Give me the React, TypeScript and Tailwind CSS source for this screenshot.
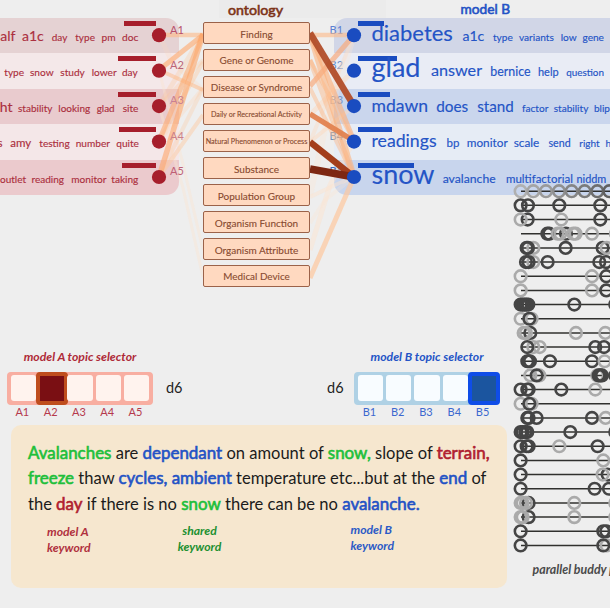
import React from 'react';

type Word = [text: string, x: number, size: number];
type Topic = { words: Word[]; bar: [number, number]; bg: string; label: string };

const topicsA: Topic[] = [
  { words: [['half', -7.5, 14], ['a1c', 22, 14], ['day', 51.7, 10], ['type', 75.3, 10], ['pm', 101.5, 10.2], ['doc', 122, 10.2]], bar: [123.5, 155.7], bg: 'bg-[#e5d2d3]', label: 'text-[#b8506a]' },
  { words: [['type', 4.3, 10.1], ['snow', 30, 10.1], ['study', 60.3, 10.1], ['lower', 91.7, 10.1], ['day', 122, 10]], bar: [118, 155.7], bg: 'bg-[#f4e8e9]', label: 'text-[#bb6478]' },
  { words: [['ght', -7.5, 14], ['stability', 18, 10], ['looking', 58.3, 10], ['glad', 96.7, 9.9], ['site', 122.7, 10.1]], bar: [118, 155.7], bg: 'bg-[#e9cbce]', label: 'text-[#c98193]' },
  { words: [['s', -2.5, 11.5], ['amy', 10.3, 11.5], ['testing', 39.3, 10.1], ['number', 75.7, 10.1], ['quite', 116.3, 10.1]], bar: [119, 155.7], bg: 'bg-[#f4e7e8]', label: 'text-[#cb7f8a]' },
  { words: [['outlet', 0, 10], ['reading', 31.5, 10], ['monitor', 71.3, 10.1], ['taking', 111.3, 10.1]], bar: [122, 155.7], bg: 'bg-[#ebcacd]', label: 'text-[#bf5f75]' },
];

const topicsB: Topic[] = [
  { words: [['diabetes', 371.5, 22], ['a1c', 462.4, 14.1], ['type', 493, 10.1], ['variants', 519, 10.1], ['low', 560.7, 10.1], ['gene', 582.5, 10.1]], bar: [357.7, 384], bg: 'bg-[#d1d6e7]', label: 'text-[#5c80d2]' },
  { words: [['glad', 371.5, 27], ['answer', 430.9, 16.2], ['bernice', 490.3, 12.4], ['help', 538, 11], ['question', 566.3, 9.9]], bar: [357.7, 397.3], bg: 'bg-[#e9ecf5]', label: 'text-[#668cc8]' },
  { words: [['mdawn', 371.5, 17.6], ['does', 436.2, 15.3], ['stand', 477.3, 15.2], ['factor', 522, 10.1], ['stability', 553.7, 10.1], ['blip', 594, 10]], bar: [357.7, 390], bg: 'bg-[#cad6ed]', label: 'text-[#7394c8]' },
  { words: [['readings', 371.5, 17.7], ['bp', 446.5, 11.5], ['monitor', 466.7, 11.8], ['scale', 513.7, 11.8], ['send', 548.5, 10.7], ['right', 579.3, 10], ['hypo', 605.5, 10]], bar: [357.7, 391.7], bg: 'bg-[#e6ecf5]', label: 'text-[#6f92b8]' },
  { words: [['snow', 371.5, 27], ['avalanche', 442.7, 12.2], ['multifactorial', 506, 11.5], ['niddm', 576.5, 10.9]], bar: [357.7, 414], bg: 'bg-[#c8d5ed]', label: 'text-[#3a67bd]' },
];

const concepts: [string, string][] = [
  ['Finding', 'text-[10px]'],
  ['Gene or Genome', 'text-[9.9px]'],
  ['Disease or Syndrome', 'text-[9.9px]'],
  ['Daily or Recreational Activity', 'text-[7.2px]'],
  ['Natural Phenomenon or Process', 'text-[7.2px]'],
  ['Substance', 'text-[10px]'],
  ['Population Group', 'text-[10px]'],
  ['Organism Function', 'text-[10px]'],
  ['Organism Attribute', 'text-[10px]'],
  ['Medical Device', 'text-[9.9px]'],
];

// [path, colour, width, opacity]
const links: [string, string, number, number][] = [
  ['M159 35 L172 62 L203 90', '#fbd9c0', 5, 0.25],
  ['M159 70 L182 160 L203 250', '#fbe3d0', 3, 0.4],
  ['M159 106 L183 188 L203 277', '#fbe3d0', 3, 0.4],
  ['M159 106 L203 60', '#fcc79d', 4, 0.3],
  ['M159 106 L203 34', '#fcc79d', 5, 0.3],
  ['M159 141 L203 62', '#fcc79d', 4, 0.4],
  ['M159 141 L203 88', '#fbd9c0', 4, 0.4],
  ['M159 177 L203 88', '#fcc79d', 4, 0.3],
  ['M159 177 L203 115', '#fcc79d', 4, 0.45],
  ['M159 70 L203 90', '#fdb987', 4, 0.5],
  ['M159 35 L203 35', '#fdb987', 4.5, 0.6],
  ['M159 70 L203 35', '#fdae77', 5, 0.65],
  ['M159 141 L203 34', '#fda76b', 5, 0.55],
  ['M159 177 L203 34', '#fda76b', 5.5, 0.6],
  ['M310 35 L354 35', '#fdb987', 4.5, 0.6],
  ['M354 35 L310 142', '#fbd9c0', 4, 0.4],
  ['M354 35 L326 125 L310 195', '#fbe3d0', 6, 0.3],
  ['M354 70 L310 115', '#fbd9c0', 5, 0.5],
  ['M354 106 L310 142', '#fbd9c0', 4, 0.5],
  ['M354 141 L330 185 L310 250', '#fbe3d0', 5, 0.5],
  ['M354 177 L335 185 L310 197', '#fbe3d0', 4, 0.5],
  ['M354 177 L325 200 L310 223', '#fbe3d0', 4, 0.3],
  ['M310 34 L354 141', '#fdae77', 5, 0.6],
  ['M310 34 L354 177', '#fdae77', 6, 0.55],
  ['M310 60 L354 141', '#fdb987', 4, 0.5],
  ['M310 60 L354 177', '#fdae77', 5, 0.4],
  ['M310 88 L354 177', '#fdb987', 4, 0.45],
  ['M310 86 L354 35', '#f8ab7e', 5, 0.7],
  ['M310 278 L354 177', '#fdc79e', 5, 0.7],
  ['M310 114 L354 141', '#e2824f', 5.5, 0.95],
  ['M310 33 L354 106', '#b14d29', 6.5, 0.95],
  ['M310 142 L354 177', '#a33e1c', 6.5, 1],
  ['M310 169 L354 177', '#7d2712', 7.5, 1],
];

const D = '#454545';
const G = '#aaaaaa';
type Mark = [number, string];
const d = (...xs: number[]): Mark[] => xs.map((x) => [x, D]);
const g = (...xs: number[]): Mark[] => xs.map((x) => [x, G]);

const plots: Mark[][] = [
  [[46, '#b0b0b0'], [84, '#a4a4a4'], [122, '#9a9a9a'], [161, '#909090'], [199, '#858585'], [238, '#7b7b7b'], [276, '#6e6e6e'], [312, '#606060']],
  d(46, 68, 162, 285),
  [...d(67), ...g(46, 168), ...d(285)],
  [...d(126, 132, 182), ...g(157, 165, 204, 211, 260, 332)],
  [...g(84), ...d(64, 68, 181, 292), ...g(304)],
  [...g(84), ...d(62, 70, 127, 282, 302)],
  [...g(46, 260), ...d(303)],
  [...g(46, 260), ...d(303)],
  d(46, 52, 58, 63, 69, 207, 330),
  [...g(46, 79), ...d(72)],
  [...d(75), ...g(55, 62, 212, 300), ...d(335)],
  [...g(103, 84), ...d(66, 270, 296)],
  [...d(66, 70, 74, 134, 260), ...g(298)],
  [...g(75, 102), ...d(94), ...g(276), ...d(280, 285, 290, 330)],
  [...d(46, 66, 70, 168), ...g(270)],
  [...g(46, 79), ...d(72)],
  [...d(66, 70, 94, 260), ...g(301)],
  d(46, 52, 60, 66, 195, 330),
  [...d(46, 64, 70), ...g(162), ...d(277)],
  [...d(46), ...g(294)],
  [...d(46, 307), ...g(292)],
  d(46, 268, 311),
  [...d(70), ...g(46, 52, 62, 207, 330)],
  [...d(70), ...g(46, 52, 207, 330)],
  d(46, 294, 303),
  [...d(46), ...g(304), ...d(294)],
];

function TopicPanel({ side, topics }: { side: 'A' | 'B'; topics: Topic[] }) {
  const a = side === 'A';
  const left = a ? 0 : 334;
  return (
    <div className={a ? 'w-[179px] shrink-0' : 'w-[276px] shrink-0'}>
      {topics.map((t, i) => {
        const round = a
          ? i === 0 ? 'rounded-tr-[13px]' : i === 4 ? 'rounded-br-[13px]' : ''
          : i === 0 ? 'rounded-tl-[13px]' : i === 4 ? 'rounded-bl-[13px]' : '';
        return (
          <div key={i} className={`relative flex h-[35.45px] items-baseline ${t.bg} ${round}`}>
            <div
              className={`absolute top-[3px] h-[5px] ${a ? 'bg-[#a61e2b]' : 'bg-[#1a4cc0]'}`}
              style={{ left: t.bar[0] - left, width: t.bar[1] - t.bar[0] }}
            />
            <span className={`absolute top-[4.5px] text-[11px] leading-[14px] ${t.label} ${a ? 'left-[170px] z-20' : '-left-[4.5px]'}`}>
              {side}{i + 1}
            </span>
            <div className="h-[23px] shrink-0" style={{ marginLeft: t.words[0][1] - left }} />
            {t.words.map(([text, x, size], k) => (
              <span
                key={k}
                className={`shrink-0 whitespace-nowrap leading-[0.8] [-webkit-text-stroke:0.15px_currentColor] ${size > 25 ? 'translate-y-px' : ''} ${a ? 'text-[#ac3040]' : 'text-[#2454c6]'}`}
                style={{ fontSize: size, width: k + 1 < t.words.length ? t.words[k + 1][1] - x : 30 }}
              >
                {text}
              </span>
            ))}
          </div>
        );
      })}
    </div>
  );
}

function Selector({ side, selected }: { side: 'A' | 'B'; selected: number }) {
  const a = side === 'A';
  return (
    <div className="w-[146px]">
      <div className={`whitespace-nowrap text-center text-[12.2px] font-bold italic leading-[14px] ${a ? 'text-[#ae2937]' : 'text-[#2454c6]'}`}>
        model {side} topic selector
      </div>
      <div className={`mt-[8px] flex h-[32.5px] items-center rounded-[4px] px-[2.2px] ${a ? 'bg-[#f8aea1]' : 'bg-[#afd1e5]'}`}>
        {[0, 1, 2, 3, 4].map((i) => (
          <div key={i} className="flex w-[28.3px] shrink-0 justify-center">
            {i === selected ? (
              <div className={`h-[32.5px] w-[32px] shrink-0 rounded-[4px] border-4 ${a ? 'border-[#bf4d1d] bg-[#7a0f13]' : 'border-[#0f4de8] bg-[#1b559f]'}`} />
            ) : (
              <div className={`h-[26px] w-[25.4px] rounded-[3px] ${a ? 'bg-[#fff3ee]' : 'bg-[#f8fcff]'}`} />
            )}
          </div>
        ))}
      </div>
      <div className={`mt-[0.5px] flex px-[1.2px] text-[11px] leading-[14px] ${a ? 'text-[#b5394c]' : 'text-[#3c68cf]'}`}>
        {[1, 2, 3, 4, 5].map((i) => (
          <span key={i} className="w-[28.3px] shrink-0 text-center">{side}{i}</span>
        ))}
      </div>
    </div>
  );
}

function K({ c, children }: { c: 'a' | 'b' | 's'; children: React.ReactNode }) {
  const color = c === 'a' ? 'text-[#b0202f]' : c === 'b' ? 'text-[#2352c5]' : 'text-[#20bf3a]';
  return <span className={`text-[16.95px] [-webkit-text-stroke:0.6px_currentColor] ${color}`}>{children}</span>;
}

export default function App() {
  return (
    <div className="relative flex h-[608px] w-[610px] flex-col overflow-hidden bg-[#eeeeee] font-['Lato',sans-serif]">
      <header className="flex h-[18px] shrink-0">
        <div className="ml-[219px] w-[167px] bg-[#ebebeb] pl-[9px] text-[14.2px] leading-[20px] text-[#7d3318] [-webkit-text-stroke:0.6px_currentColor]">ontology</div>
        <div className="ml-[74.5px] whitespace-nowrap text-[13.7px] leading-[18px] text-[#2352c5] [-webkit-text-stroke:0.6px_currentColor]">model B</div>
      </header>

      <main className="relative flex h-[332px] shrink-0">
        <TopicPanel side="A" topics={topicsA} />
        <div className="w-[24px] shrink-0" />
        <div className="relative z-20 mt-[3.5px] flex w-[107px] shrink-0 flex-col gap-[5px]">
          {concepts.map(([name, size]) => (
            <div key={name} className="flex h-[22px] items-center justify-center rounded-[2px] border border-[#9b6249] bg-[#ffd9c0] pt-[2.5px]">
              <span className={`whitespace-nowrap leading-none text-[#87492f] [-webkit-text-stroke:0.1px_currentColor] ${size}`}>{name}</span>
            </div>
          ))}
        </div>
        <div className="w-[24px] shrink-0" />
        <TopicPanel side="B" topics={topicsB} />
        <svg className="pointer-events-none absolute left-0 top-0 z-10" width="610" height="332" viewBox="0 18 610 332" fill="none">
          {links.map(([path, color, w, o], i) => (
            <path key={i} d={path} stroke={color} strokeWidth={w} strokeOpacity={o} />
          ))}
          {[35.2, 70.7, 106.1, 141.6, 177].map((y) => (
            <g key={y}>
              <circle cx="159" cy={y} r="7.1" fill="#a61e2b" />
              <circle cx="354" cy={y} r="7.1" fill="#1a4cc0" />
            </g>
          ))}
        </svg>
      </main>

      <section className="flex h-[75px] shrink-0">
        <div className="ml-[7px]"><Selector side="A" selected={1} /></div>
        <div className="ml-[13px] mt-[28px] text-[14.5px] leading-[20px] text-[#222]">d6</div>
        <div className="ml-[144.5px] mt-[28px] text-[14.5px] leading-[20px] text-[#222]">d6</div>
        <div className="ml-[10.5px]"><Selector side="B" selected={4} /></div>
      </section>

      <section className="ml-[10.6px] h-[162.5px] w-[496px] shrink-0 rounded-[10px] bg-[#f6e7cf] pl-[17.4px] pt-[15px]">
        <div className="whitespace-nowrap text-[16.55px] leading-[25.4px] text-[#1b1b1b]">
          <div className="h-[25.4px]"><K c="s">Avalanches</K> are <K c="b">dependant</K> on amount of <K c="s">snow,</K> slope of <K c="a">terrain,</K></div>
          <div className="h-[25.4px]"><K c="s">freeze</K> thaw <K c="b">cycles, ambient</K> temperature etc...but at the <K c="b">end</K> of</div>
          <div className="h-[25.4px]">the <K c="a">day</K> if there is no <K c="s">snow</K> there can be no <K c="b">avalanche.</K></div>
        </div>
        <div className="flex text-[12.2px] font-bold italic leading-[16.2px]">
          <div className="ml-[19px] mt-[8px] w-[129.5px] text-[#b0303e]">model A<br />keyword</div>
          <div className="mt-[7px] w-[46px] text-center text-[#1c9030]">shared<br />keyword</div>
          <div className="ml-[128px] mt-[6px] text-[#2c5ac6]">model B<br />keyword</div>
        </div>
      </section>

      <figure className="absolute left-[505px] top-[180px] z-30">
        <svg width="105" height="380" viewBox="0 0 105 380" fill="none">
          {plots.map((marks, r) => {
            const y = 11.2 + r * 14.17;
            return (
              <g key={r}>
                <path d={`M16 ${y} H105`} stroke="#30302e" strokeWidth="1.5" />
                {marks.map(([x, color], k) => (
                  <circle key={k} cx={x / 3 + 0.3} cy={y} r="5.8" stroke={color} strokeWidth="2.6" />
                ))}
              </g>
            );
          })}
        </svg>
        <figcaption className="ml-[27.5px] mt-[2px] whitespace-nowrap text-[12.4px] font-bold italic leading-[16px] text-[#4a4a4a]">parallel buddy plots</figcaption>
      </figure>
    </div>
  );
}
